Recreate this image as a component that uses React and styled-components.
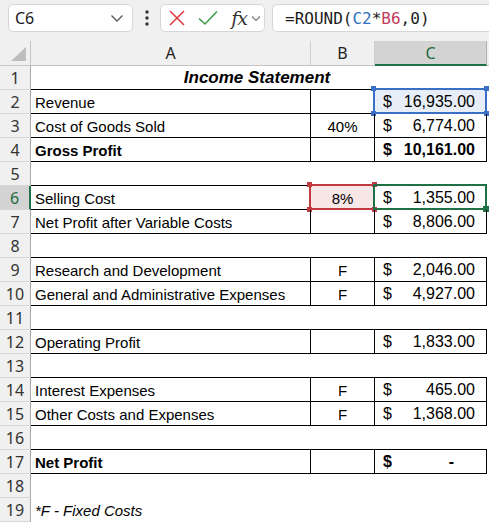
import React from "react";
import styled, { createGlobalStyle, css } from "styled-components";

const Global = createGlobalStyle`
  html, body { margin: 0; padding: 0; background: #ffffff; }
  body { width: 489px; height: 527px; overflow: hidden; font-family: "Liberation Sans", Arial, sans-serif; }
`;

const Page = styled.div`
  width: 489px;
  height: 527px;
  background: #fff;
  overflow: hidden;
`;

const Toolbar = styled.div`
  height: 41px;
  box-sizing: border-box;
  background: #f0f0f0;
  display: flex;
  align-items: flex-start;
  padding: 4px 0 0 8px;
`;

const NameBox = styled.div`
  width: 125px;
  height: 28px;
  box-sizing: border-box;
  background: #fff;
  border: 1px solid #d6d6d6;
  border-radius: 5px;
  display: flex;
  align-items: center;
  justify-content: space-between;
  padding: 0 8px 0 6px;
  font-family: "Noto Sans", sans-serif;
  font-size: 16px;
  color: #1a1a1a;
`;

const Dots = styled.div`
  width: 27px;
  height: 28px;
  display: flex;
  align-items: center;
  justify-content: center;
`;

const Controls = styled.div`
  width: 105px;
  height: 28px;
  box-sizing: border-box;
  background: #fff;
  border: 1px solid #d6d6d6;
  border-radius: 5px;
  display: flex;
  align-items: center;
  padding: 0 0 0 7px;
`;

const IconSlot = styled.div`
  width: ${(p) => p.$w || 31}px;
  height: 26px;
  display: flex;
  align-items: center;
  justify-content: center;
`;

const Fx = styled.span`
  font-family: "DejaVu Serif", "Liberation Serif", serif;
  font-style: italic;
  font-size: 19px;
  color: #333;
  letter-spacing: -1px;
  line-height: 1;
`;

const FormulaInput = styled.div`
  flex: 1;
  margin-left: 7px;
  height: 28px;
  box-sizing: border-box;
  background: #fff;
  border: 1px solid #d6d6d6;
  border-right: none;
  border-radius: 5px 0 0 5px;
  display: flex;
  align-items: center;
  padding-left: 12px;
  font-family: "DejaVu Sans Mono", "Liberation Mono", monospace;
  font-size: 16px;
  color: #1a1a1a;
  white-space: pre;
`;

const Ref = styled.span`
  color: ${(p) => p.$c};
`;

const COLS = "31px 280px 64px 112px 1fr";

const HeaderRow = styled.div`
  display: grid;
  grid-template-columns: ${COLS};
  height: 25px;
  background: #f0f0f0;
`;

const Corner = styled.div`
  position: relative;
  box-sizing: border-box;
  border-right: 1px solid #c4c4c4;
  border-bottom: 1px solid #c4c4c4;
`;

const CornerTri = styled.div`
  position: absolute;
  right: 4px;
  bottom: 4px;
  width: 0;
  height: 0;
  border-left: 15px solid transparent;
  border-bottom: 14px solid #bdbdbd;
`;

const ColHead = styled.div`
  box-sizing: border-box;
  display: flex;
  align-items: center;
  justify-content: center;
  font-family: "Noto Sans", sans-serif;
  font-size: 16px;
  color: #222;
  border-right: 1px solid #cfcfcf;
  border-bottom: 1px solid #c4c4c4;
  ${(p) =>
    p.$active &&
    css`
      background: #d3d3d3;
      color: #1e6b40;
      border-bottom: 2px solid #1f7145;
      border-right: 1px solid #b0b0b0;
    `}
  ${(p) =>
    p.$filler &&
    css`
      border-right: none;
    `}
`;

const Row = styled.div`
  display: grid;
  grid-template-columns: ${COLS};
  height: 24px;
`;

const RowHead = styled.div`
  box-sizing: border-box;
  background: #f0f0f0;
  border-right: 1px solid #a8a8a8;
  border-bottom: 1px solid #d6d6d6;
  display: flex;
  align-items: center;
  justify-content: center;
  padding-top: 1px;
  font-family: "Noto Sans", sans-serif;
  font-size: 16px;
  color: #333;
  ${(p) =>
    p.$active &&
    css`
      background: #d3d3d3;
      color: #1e6b40;
      border-right: 2px solid #1f7145;
    `}
`;

const Cell = styled.div`
  position: relative;
  box-sizing: border-box;
  display: flex;
  align-items: center;
  font-size: 15px;
  color: #000;
  white-space: nowrap;
  padding: 1px 4px 0;
  border-bottom: ${(p) => (p.$line ? "1px solid #000" : "none")};
  border-right: ${(p) => (p.$box ? "1px solid #000" : "none")};
  justify-content: ${(p) => (p.$center ? "center" : "flex-start")};
  font-weight: ${(p) => (p.$bold ? 700 : 400)};
  font-style: ${(p) => (p.$italic ? "italic" : "normal")};
  background: ${(p) => p.$bg || "transparent"};
  grid-column: ${(p) => p.$span || "auto"};
`;

const Title = styled(Cell)`
  font-size: 17px;
  font-weight: 700;
  font-style: italic;
  padding-right: 8px;
`;

const Money = styled(Cell)`
  justify-content: space-between;
  padding: 1px 11px 0 8px;
  font-size: 16px;
`;

const Dash = styled.span`
  padding-right: 21px;
`;

const Outline = styled.div`
  position: absolute;
  left: -2px;
  top: -2px;
  right: -1px;
  bottom: -1px;
  border: 2px solid ${(p) => p.$c};
  pointer-events: none;
`;

const Handle = styled.div`
  position: absolute;
  width: ${(p) => p.$s || 5}px;
  height: ${(p) => p.$s || 5}px;
  background: ${(p) => p.$c};
  ${(p) => (p.$v === "t" ? "top: -4px;" : "bottom: -4px;")}
  ${(p) => (p.$h === "l" ? "left: -4px;" : "right: -4px;")}
`;

function RefBox({ color, all = true, size }) {
  return (
    <Outline $c={color}>
      {all && (
        <>
          <Handle $c={color} $v="t" $h="l" />
          <Handle $c={color} $v="t" $h="r" />
          <Handle $c={color} $v="b" $h="l" />
        </>
      )}
      <Handle $c={color} $v="b" $h="r" $s={size} />
    </Outline>
  );
}

const rows = [
  { n: 1, title: true },
  { n: 2, a: "Revenue", c: "16,935.00", box: true, cRef: "blue" },
  { n: 3, a: "Cost of Goods Sold", b: "40%", c: "6,774.00", box: true },
  { n: 4, a: "Gross Profit", c: "10,161.00", box: true, bold: true },
  { n: 5 },
  { n: 6, a: "Selling Cost", b: "8%", c: "1,355.00", box: true, bRef: "red", active: true },
  { n: 7, a: "Net Profit after Variable Costs", c: "8,806.00", box: true },
  { n: 8 },
  { n: 9, a: "Research and Development", b: "F", c: "2,046.00", box: true },
  { n: 10, a: "General and Administrative Expenses", b: "F", c: "4,927.00", box: true },
  { n: 11 },
  { n: 12, a: "Operating Profit", c: "1,833.00", box: true },
  { n: 13 },
  { n: 14, a: "Interest Expenses", b: "F", c: "465.00", box: true },
  { n: 15, a: "Other Costs and Expenses", b: "F", c: "1,368.00", box: true },
  { n: 16 },
  { n: 17, a: "Net Profit", c: "-", box: true, bold: true },
  { n: 18, noLine: true },
  { n: 19, noLine: true, note: "*F - Fixed Costs" },
];

function SheetRow({ r }) {
  const line = !r.noLine;
  if (r.title) {
    return (
      <Row>
        <RowHead>{r.n}</RowHead>
        <Title $line $center $span="2 / 5">Income Statement</Title>
        <Cell />
      </Row>
    );
  }
  return (
    <Row>
      <RowHead $active={r.active}>{r.n}</RowHead>
      <Cell $line={line} $box={r.box} $bold={r.bold} $italic={!!r.note}>
        {r.a || r.note}
      </Cell>
      <Cell $line={line} $box={r.box} $center $bg={r.bRef ? "#f8e7e7" : undefined}>
        {r.b}
        {r.bRef && <RefBox color="#c0393e" />}
      </Cell>
      {r.c ? (
        <Money $line={line} $box={r.box} $bold={r.bold} $bg={r.cRef ? "#e8eef8" : undefined}>
          <span>$</span>
          {r.c === "-" ? <Dash>-</Dash> : <span>{r.c}</span>}
          {r.cRef && <RefBox color="#3a6fc6" />}
          {r.active && <RefBox color="#1f7145" all={false} size={6} />}
        </Money>
      ) : (
        <Cell $line={line} $box={r.box} />
      )}
      <Cell />
    </Row>
  );
}

export default function App() {
  return (
    <Page>
      <Global />
      <Toolbar>
        <NameBox>
          <span>C6</span>
          <svg width="14" height="9" viewBox="0 0 14 9">
            <path d="M1.5 1.5 L7 7 L12.5 1.5" fill="none" stroke="#555" strokeWidth="1.3" />
          </svg>
        </NameBox>
        <Dots>
          <svg width="4" height="16" viewBox="0 0 4 16">
            <circle cx="2" cy="2" r="1.7" fill="#333" />
            <circle cx="2" cy="8" r="1.7" fill="#333" />
            <circle cx="2" cy="14" r="1.7" fill="#333" />
          </svg>
        </Dots>
        <Controls>
          <IconSlot $w={18}>
            <svg width="16" height="16" viewBox="0 0 16 16">
              <path d="M1 1 L15 15 M15 1 L1 15" stroke="#e0383e" strokeWidth="1.5" fill="none" />
            </svg>
          </IconSlot>
          <IconSlot $w={44}>
            <svg width="20" height="16" viewBox="0 0 20 16">
              <path d="M1 8.5 L7 14 L19 1.5" stroke="#3c9a4a" strokeWidth="1.6" fill="none" />
            </svg>
          </IconSlot>
          <IconSlot $w={18}>
            <Fx>fx</Fx>
          </IconSlot>
          <IconSlot $w={16}>
            <svg width="10" height="7" viewBox="0 0 10 7">
              <path d="M1 1.5 L5 5.5 L9 1.5" fill="none" stroke="#777" strokeWidth="1.1" />
            </svg>
          </IconSlot>
        </Controls>
        <FormulaInput>
          =ROUND(<Ref $c="#2f70c0">C2</Ref>*<Ref $c="#c0395b">B6</Ref>,0)
        </FormulaInput>
      </Toolbar>
      <HeaderRow>
        <Corner>
          <CornerTri />
        </Corner>
        <ColHead>A</ColHead>
        <ColHead>B</ColHead>
        <ColHead $active>C</ColHead>
        <ColHead $filler />
      </HeaderRow>
      {rows.map((r) => (
        <SheetRow key={r.n} r={r} />
      ))}
    </Page>
  );
}
